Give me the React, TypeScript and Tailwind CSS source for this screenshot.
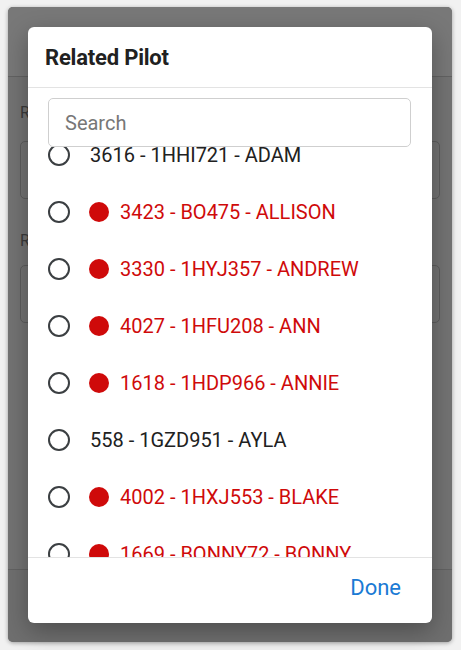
import React from "react";

type Pilot = { label: string; flagged: boolean };

const pilots: Pilot[] = [
  { label: "3616 - 1HHI721 - ADAM", flagged: false },
  { label: "3423 - BO475 - ALLISON", flagged: true },
  { label: "3330 - 1HYJ357 - ANDREW", flagged: true },
  { label: "4027 - 1HFU208 - ANN", flagged: true },
  { label: "1618 - 1HDP966 - ANNIE", flagged: true },
  { label: "558 - 1GZD951 - AYLA", flagged: false },
  { label: "4002 - 1HXJ553 - BLAKE", flagged: true },
  { label: "1669 - BONNY72 - BONNY", flagged: true },
];

export default function App() {
  return (
    <div
      className="relative w-[461px] h-[650px] bg-[#f1f1f1] pl-[8px] pr-[9px] pt-[7px] overflow-hidden"
      style={{ fontFamily: "Roboto, 'Noto Sans', sans-serif" }}
    >
      {/* Background card, dimmed */}
      <div className="h-[635px] rounded-[5px] bg-[#737373] shadow-[0_1px_4px_rgba(0,0,0,0.35)] flex flex-col overflow-hidden">
        <div className="h-[70px] shrink-0 bg-[#787878] border-b border-[#626262]" />
        <div className="flex-1 px-[12px] pt-[26px] flex flex-col">
          <div className="text-[16px] leading-[20px] text-[#3a3a3a]">R</div>
          <div className="mt-[18px] h-[58px] rounded-[5px] border border-[#5d5d5d]" />
          <div className="mt-[32px] text-[16px] leading-[20px] text-[#3a3a3a]">R</div>
          <div className="mt-[14px] h-[58px] rounded-[5px] border border-[#5d5d5d]" />
          <div className="flex-1" />
        </div>
        <div className="h-[73px] shrink-0 border-t border-[#626262] bg-[#6f6f6f]" />
      </div>

      {/* Dialog */}
      <div className="absolute left-[28px] top-[27px] w-[404px] h-[596px] bg-white rounded-[6px] flex flex-col overflow-hidden shadow-[0_8px_24px_rgba(0,0,0,0.3)]">
        <div className="h-[61px] shrink-0 flex items-center px-[17px] pt-[1px] border-b border-[#e3e3e3]">
          <span className="text-[22px] font-bold text-[#212121] tracking-[-0.2px]">Related Pilot</span>
        </div>
        <div className="shrink-0 pt-[10px] pl-[20px] pr-[21px] relative z-10 bg-transparent">
          <div className="h-[49px] rounded-[5px] border border-[#cfcfcf] bg-white flex items-center px-[16px]">
            <span className="text-[20px] text-[#777777]">Search</span>
          </div>
        </div>
        <div className="flex-1 overflow-hidden">
          <div className="-mt-[21px]">
            {pilots.map((p) => (
              <div key={p.label} className="h-[57px] flex items-center pl-[20px]">
                <span className="w-[22px] h-[22px] rounded-full border-[2px] border-[#3b3f42] shrink-0" />
                {p.flagged ? (
                  <>
                    <span className="ml-[19px] w-[20px] h-[20px] rounded-full bg-[#cf0a0a] shrink-0" />
                    <span className="ml-[11px] text-[20px] text-[#cf0a0a] whitespace-nowrap">{p.label}</span>
                  </>
                ) : (
                  <span className="ml-[20px] text-[20px] text-[#212121] whitespace-nowrap">{p.label}</span>
                )}
              </div>
            ))}
          </div>
        </div>
        <div className="h-[66px] shrink-0 border-t border-[#e3e3e3] flex items-center justify-end pr-[31px] pb-[7px]">
          <span className="text-[22px] text-[#1a7ad4]">Done</span>
        </div>
      </div>
    </div>
  );
}
